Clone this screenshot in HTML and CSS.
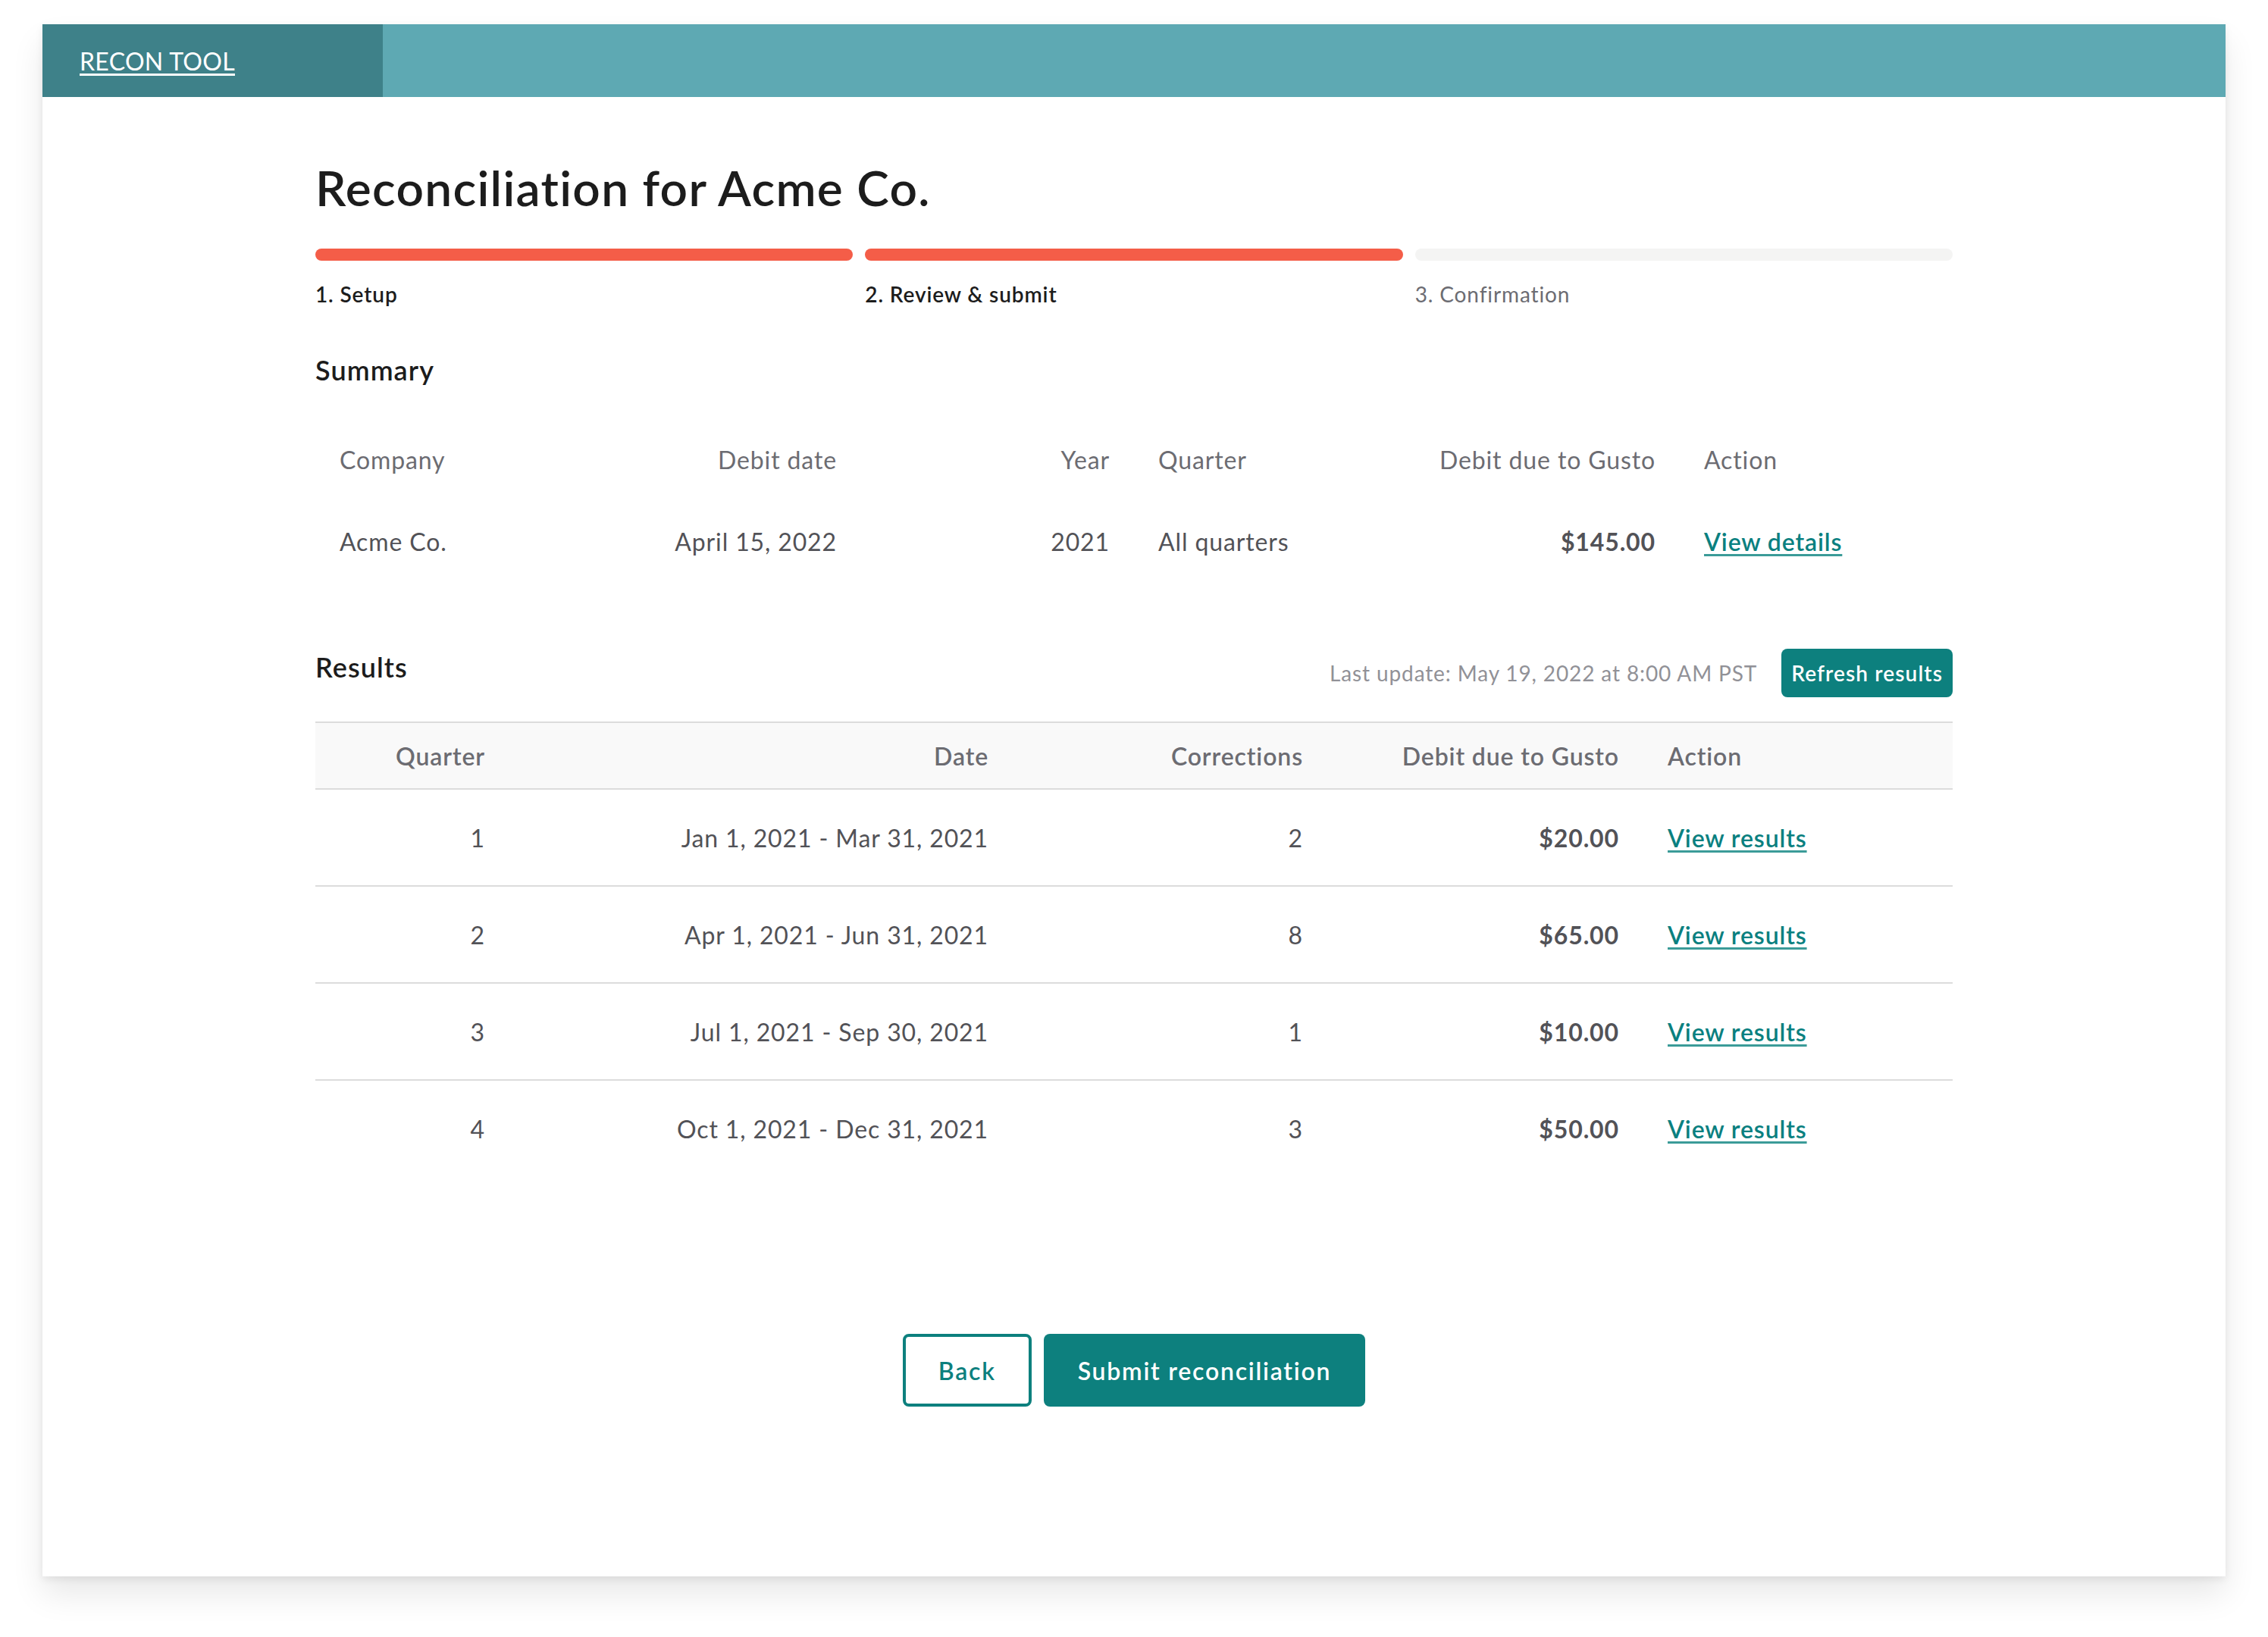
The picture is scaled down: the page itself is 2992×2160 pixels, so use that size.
FILE: index.html
```html
<!DOCTYPE html>
<html lang="en">
<head>
<meta charset="utf-8">
<title>Recon Tool</title>
<link rel="stylesheet" href="styles.css">
</head>
<body>
<div class="window">
  <header class="topbar">
    <div class="brand"><a class="brand-link" href="#">RECON TOOL</a></div>
  </header>
  <main class="content">
    <h1 class="title">Reconciliation for Acme Co.</h1>
    <div class="steps">
      <div class="step done"><div class="bar"></div><div class="step-label">1. Setup</div></div>
      <div class="step done"><div class="bar"></div><div class="step-label">2. Review &amp; submit</div></div>
      <div class="step todo"><div class="bar"></div><div class="step-label">3. Confirmation</div></div>
    </div>

    <h2 class="section-title summary-title">Summary</h2>
    <table class="summary">
      <colgroup><col class="c6"><col class="c6"><col class="c6"><col class="c6"><col class="c6"><col class="c6"></colgroup>
      <thead>
        <tr><th class="l">Company</th><th class="r">Debit date</th><th class="r">Year</th><th class="l">Quarter</th><th class="r">Debit due to Gusto</th><th class="l">Action</th></tr>
      </thead>
      <tbody>
        <tr><td class="l">Acme Co.</td><td class="r">April 15, 2022</td><td class="r">2021</td><td class="l">All quarters</td><td class="r money">$145.00</td><td class="l"><a class="link" href="#">View details</a></td></tr>
      </tbody>
    </table>

    <div class="results-head">
      <h2 class="section-title">Results</h2>
      <div class="results-tools">
        <span class="updated">Last update: May 19, 2022 at 8:00 AM PST</span>
        <button class="btn btn-small">Refresh results</button>
      </div>
    </div>
    <table class="results">
      <colgroup><col class="rc1"><col class="rc2"><col class="rc3"><col class="rc4"><col class="rc5"></colgroup>
      <thead>
        <tr><th class="r">Quarter</th><th class="r">Date</th><th class="r">Corrections</th><th class="r">Debit due to Gusto</th><th class="l">Action</th></tr>
      </thead>
      <tbody>
        <tr><td class="r">1</td><td class="r">Jan 1, 2021 - Mar 31, 2021</td><td class="r">2</td><td class="r money">$20.00</td><td class="l"><a class="link" href="#">View results</a></td></tr>
        <tr><td class="r">2</td><td class="r">Apr 1, 2021 - Jun 31, 2021</td><td class="r">8</td><td class="r money">$65.00</td><td class="l"><a class="link" href="#">View results</a></td></tr>
        <tr><td class="r">3</td><td class="r">Jul 1, 2021 - Sep 30, 2021</td><td class="r">1</td><td class="r money">$10.00</td><td class="l"><a class="link" href="#">View results</a></td></tr>
        <tr><td class="r">4</td><td class="r">Oct 1, 2021 - Dec 31, 2021</td><td class="r">3</td><td class="r money">$50.00</td><td class="l"><a class="link" href="#">View results</a></td></tr>
      </tbody>
    </table>

    <div class="actions">
      <button class="btn btn-outline">Back</button>
      <button class="btn btn-primary">Submit reconciliation</button>
    </div>
  </main>
</div>
</body>
</html>
```

FILE: styles.css
```css
* { box-sizing: border-box; }
html, body { margin: 0; padding: 0; background: #ffffff; }
body {
  font-family: Lato, "Noto Sans", sans-serif;
  color: #525257;
  letter-spacing: 0.055em;
  padding-top: 32px;
  height: 2160px;
  overflow: hidden;
}
.window {
  width: 2880px;
  height: 2048px;
  margin: 0 auto;
  background: #ffffff;
  box-shadow: 0 24px 40px rgba(0,0,0,0.09), 0 4px 10px rgba(0,0,0,0.07);
}
.topbar {
  height: 96px;
  background: #5ea9b3;
  display: flex;
}
.brand {
  width: 449px;
  background: #3e8189;
  display: flex;
  align-items: center;
  padding-left: 49px;
}
.brand-link {
  color: #ffffff;
  font-size: 32px;
  letter-spacing: 0.01em;
  text-decoration: underline;
  text-decoration-thickness: 3px;
  text-underline-offset: 4px;
}
.content {
  width: 2160px;
  margin: 0 auto;
}
.title {
  margin: 0;
  padding-top: 80px;
  font-size: 64px;
  line-height: 80px;
  font-weight: 600;
  letter-spacing: 0.02em;
  color: #1c1c1c;
}
.steps {
  display: flex;
  gap: 16px;
  margin-top: 40px;
}
.step { flex: 1; }
.bar {
  height: 16px;
  border-radius: 8px;
  background: #f45d48;
}
.todo .bar { background: #f4f4f3; }
.step-label {
  margin-top: 24px;
  font-size: 28px;
  line-height: 40px;
  font-weight: 600;
  color: #1c1c1c;
}
.todo .step-label { font-weight: 400; color: #6c6c72; }
.section-title {
  margin: 0;
  font-size: 36px;
  line-height: 48px;
  font-weight: 600;
  letter-spacing: 0.03em;
  color: #1c1c1c;
}
.summary-title { margin-top: 56px; }
table {
  border-collapse: collapse;
  table-layout: fixed;
  width: 2160px;
}
.c6 { width: 360px; }
th, td { padding: 0 32px; white-space: nowrap; font-size: 32px; }
.l { text-align: left; }
.r { text-align: right; }
.summary { margin-top: 40px; }
.summary th { height: 108px; font-weight: 400; color: #6c6c72; }
.summary td { height: 108px; color: #525257; }
.money { font-weight: 700; color: #525257; }
.link {
  color: #0a8080;
  font-weight: 600;
  text-decoration: underline;
  text-decoration-thickness: 3px;
  text-underline-offset: 4px;
  text-decoration-color: #3b9b98;
}
.results-head {
  margin-top: 88px;
  display: flex;
  justify-content: space-between;
  align-items: flex-start;
}
.results-tools {
  display: flex;
  align-items: center;
  gap: 32px;
}
.updated { font-size: 28px; color: #919197; }
.btn {
  font-family: inherit;
  letter-spacing: 0.055em;
  border: none;
  border-radius: 8px;
  cursor: pointer;
}
.btn-small {
  height: 64px;
  padding: 0 13px;
  background: #0d807e;
  color: #ffffff;
  font-size: 28px;
  font-weight: 600;
  letter-spacing: 0.04em;
}
.results { margin-top: 32px; }
.rc1 { width: 256px; }
.rc2 { width: 664px; }
.rc3 { width: 415px; }
.rc4 { width: 417px; }
.rc5 { width: 408px; }
.results thead tr {
  background: #f9f9f9;
  border-top: 2px solid #dcdcdc;
  border-bottom: 2px solid #dcdcdc;
}
.results th { height: 88px; font-weight: 600; color: #6c6c72; }
.results td { height: 128px; color: #525257; }
.results tbody tr { border-bottom: 2px solid #dcdcdc; }
.results tbody tr:last-child { border-bottom: none; }
.actions {
  margin-top: 207px;
  display: flex;
  justify-content: center;
  gap: 16px;
}
.btn-outline {
  height: 96px;
  padding: 0 43px;
  background: #ffffff;
  border: 4px solid #0d807e;
  color: #0d807e;
  font-size: 32px;
  font-weight: 600;
}
.btn-primary {
  height: 96px;
  padding: 0 45px;
  background: #0d807e;
  color: #ffffff;
  font-size: 32px;
  font-weight: 600;
}
```
